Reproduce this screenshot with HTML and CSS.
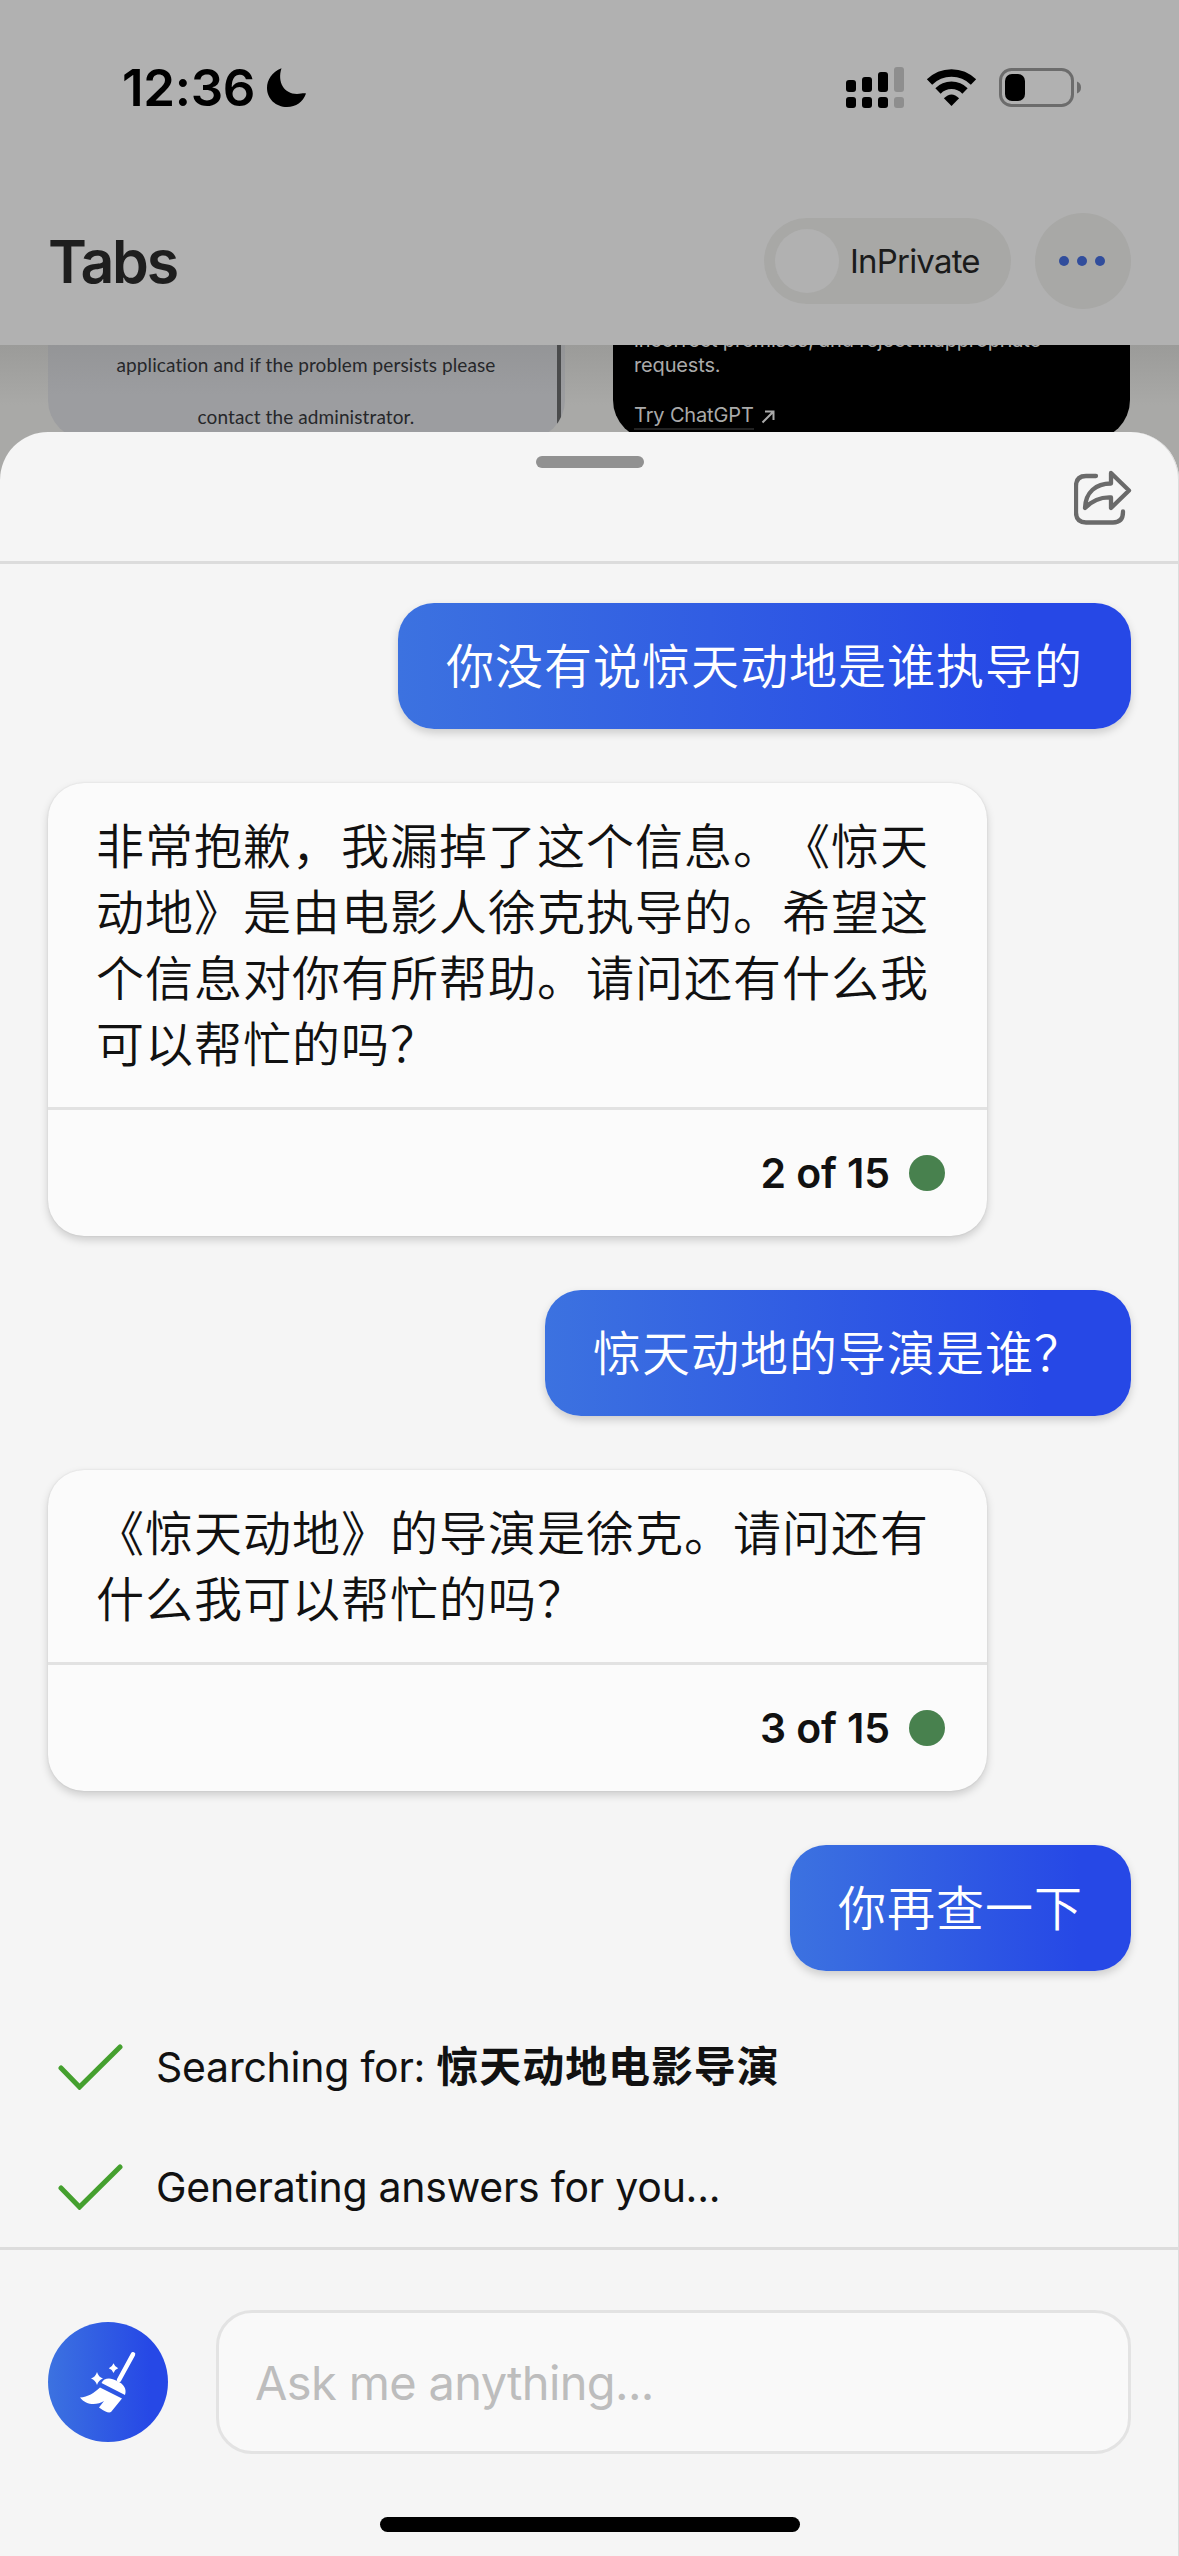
FILE: index.html
```html
<!DOCTYPE html>
<html lang="zh-CN">
<head>
    <meta charset="UTF-8">
    <meta name="viewport" content="width=device-width, initial-scale=1.0">
    <title>Chat</title>
    <link rel="stylesheet" href="styles.css">
</head>
<body>
    <header class="top">
        <div class="status-bar">
            <div class="clock">
                <span class="time">12:36</span>
                <svg class="moon" viewBox="266 68 41 41"><path d="M281.5 69.3C272 73 267 81 267 89C267 100 276 108 287 108C296 108 303 103 306 94.5C303 94 301 95 297 95C284 95 277 83 281.5 69.3Z"/></svg>
            </div>
            <svg class="status-icons" viewBox="846 66 236 43">
                <g>
                    <rect x="846" y="80" width="10" height="12" rx="3"/>
                    <rect x="862" y="77" width="10" height="15" rx="3"/>
                    <rect x="878" y="72" width="10" height="20" rx="3"/>
                    <rect x="846" y="97" width="10" height="11" rx="3"/>
                    <rect x="862" y="97" width="10" height="11" rx="3"/>
                    <rect x="878" y="97" width="10" height="11" rx="3"/>
                </g>
                <g fill="#8e8e8e">
                    <rect x="894" y="67" width="10" height="25" rx="3"/>
                    <rect x="894" y="97" width="10" height="11" rx="3"/>
                </g>
                <g fill="none" stroke="#000" stroke-width="7.5">
                    <path d="M929.5 82A31.2 31.2 0 0 1 973.5 82"/>
                    <path d="M938 91A19 19 0 0 1 965 91"/>
                </g>
                <path d="M943.9 98.3Q951.5 90.5 959.1 98.3L951.5 106Z"/>
                <rect x="1000.5" y="69.5" width="72" height="36" rx="11" fill="none" stroke="#6c6c6c" stroke-width="3"/>
                <rect x="1005" y="74" width="20" height="27" rx="7"/>
                <path d="M1077 81.5Q1081 83 1081 87.5T1077 93.500Z" fill="#6c6c6c"/>
            </svg>
        </div>
        <div class="tabs-bar">
            <h1>Tabs</h1>
            <div class="private-toggle">
                <span class="knob"></span>
                <span>InPrivate</span>
            </div>
            <div class="more"><i></i><i></i><i></i></div>
        </div>
    </header>

    <div class="tab-list">
        <div class="tab tab-error">
            <p>application and if the problem persists please</p>
            <p>contact the administrator.</p>
        </div>
        <div class="tab tab-chatgpt">
            <p>incorrect premises, and reject inappropriate<br>requests.</p>
            <div class="try">
                <span>Try ChatGPT</span>
                <svg viewBox="0 0 14 15"><path d="M1.500 13.500L12 3M4 2.500H12.500V11"/></svg>
            </div>
        </div>
    </div>

    <!-- 聊天面板 -->
    <main class="sheet">
        <div class="sheet-head">
            <div class="grabber"></div>
            <svg class="share" viewBox="34 20 58 56"><path d="M56 26H46Q36 26 36 36V62.500Q36 72.500 46 72.500H73Q83 72.500 83 62V61.500M71 23L89 40.500L71 58V47.500C61 47 52 51 45 58C45.500 42 56 33.500 71 33.500Z"/></svg>
        </div>
        <div class="chat">
            <div class="question">你没有说惊天动地是谁执导的</div>
            <div class="answer">
                <p>非常抱歉，我漏掉了这个信息。《惊天<br>动地》是由电影人徐克执导的。希望这<br>个信息对你有所帮助。请问还有什么我<br>可以帮忙的吗？</p>
                <div class="count">2 of 15<span class="dot"></span></div>
            </div>
            <div class="question">惊天动地的导演是谁？</div>
            <div class="answer">
                <p>《惊天动地》的导演是徐克。请问还有<br>什么我可以帮忙的吗？</p>
                <div class="count">3 of 15<span class="dot"></span></div>
            </div>
            <div class="question">你再查一下</div>
        </div>
        <div class="progress">
            <div class="step">
                <svg class="check" viewBox="58 45 65 46"><path d="M61 69L79.500 88L120 48"/></svg>
                <span class="searching">Searching for: <b>惊天动地电影导演</b></span>
            </div>
            <div class="step">
                <svg class="check" viewBox="58 45 65 46"><path d="M61 69L79.500 88L120 48"/></svg>
                <span>Generating answers for you...</span>
            </div>
        </div>
        <div class="composer">
            <div class="broom">
                <svg viewBox="8 12 120 120">
                    <path d="M93 44.300L79 70" stroke="#fff" stroke-width="4.500" stroke-linecap="round"/>
                    <path d="M61.500 73C64 67.500 71 67.500 77 71C84 74 87 79 85 85Z"/>
                    <path d="M60 77.500L82 88.500L71 102Q68 104 59 97.500L64 91C57 95.500 46 95.500 40 87.500C48 87 54 83 60 77.500Z"/>
                    <path d="M57 62Q58.500 67 63 68.500Q58.500 70 57 75Q55.500 70 51 68.500Q55.500 67 57 62ZM73.500 53.300Q74.700 57 78.200 58.200Q74.700 59.400 73.500 63Q72.300 59.400 68.800 58.200Q72.300 57 73.500 53.300Z"/>
                </svg>
            </div>
            <div class="input">Ask me anything...</div>
        </div>
        <div class="home-bar"></div>
    </main>
</body>
</html>
```

FILE: styles.css
```css
* {
    box-sizing: border-box;
}
body {
    margin: 0;
    width: 1179px;
    height: 2556px;
    overflow: hidden;
    background: #a9a9a7;
    font-family: Inter, "Noto Sans CJK SC", sans-serif;
    color: #111;
}
h1, p {
    margin: 0;
}
svg {
    display: block;
}

/* 顶部 */
.top {
    height: 345px;
    background: #b1b1b1;
}
.status-bar {
    display: flex;
    justify-content: space-between;
    height: 213px;
    padding: 66px 97px 0 122px;
}
.clock {
    display: flex;
    height: 43px;
    align-items: center;
}
.time {
    width: 144px;
    color: #000;
    font-size: 51px;
    font-weight: 600;
    letter-spacing: -0.3px;
}
.moon {
    width: 41px;
    height: 41px;
}
.status-icons {
    width: 236px;
    height: 43px;
}
.tabs-bar {
    display: flex;
    align-items: center;
    height: 96px;
    padding: 0 48px 0 48px;
}
.tabs-bar h1 {
    flex: 1;
    font-size: 59px;
    font-weight: 600;
    letter-spacing: -2.2px;
    color: #1e1e1e;
}
.private-toggle {
    display: flex;
    align-items: center;
    gap: 11px;
    width: 247px;
    height: 86px;
    padding-left: 11px;
    margin-right: 24px;
    border-radius: 43px;
    background: #a8a8a6;
    color: #1b1b1b;
    font-size: 33px;
    letter-spacing: -0.8px;
    white-space: nowrap;
}
.knob {
    width: 64px;
    height: 64px;
    border-radius: 50%;
    background: #b1b1b1;
}
.more {
    display: flex;
    justify-content: center;
    align-items: center;
    gap: 8px;
    width: 96px;
    height: 96px;
    padding-right: 2px;
    border-radius: 50%;
    background: #a8a8a6;
}
.more i {
    width: 10px;
    height: 10px;
    border-radius: 50%;
    background: #314d9c;
}

/* 标签页 */
.tab-list {
    display: flex;
    gap: 48px;
    height: 135px;
    padding: 0 48px;
    overflow: hidden;
    background: linear-gradient(#9b9b99, #a9a9a7 60px);
}
.tab {
    height: 95px;
    border-radius: 0 0 40px 40px;
    overflow: hidden;
}
.tab-error {
    width: 517px;
    padding-right: 1px;
    background: linear-gradient(90deg, transparent 509px, #4a4b4c 509px, #4a4b4c 513px, transparent 513px), linear-gradient(#949597, #9c9da0 50px);
    color: #26272a;
    font: 19px/52px Lato, sans-serif;
    letter-spacing: 0.1px;
    text-align: center;
}
.tab-error p:first-child {
    margin-top: -6px;
}
.tab-chatgpt {
    width: 517px;
    padding-left: 21px;
    background: #000;
    color: #aaa;
    font-size: 20px;
    line-height: 25px;
    letter-spacing: -0.15px;
}
.tab-chatgpt p {
    margin-top: -17px;
}
.try {
    display: flex;
    align-items: center;
    gap: 7px;
    margin-top: 25px;
}
.try span {
    border-bottom: 2px solid #222;
}
.try svg {
    width: 14px;
    height: 15px;
    fill: none;
    stroke: #aaa;
    stroke-width: 2;
}

/* 聊天面板 */
.sheet {
    position: relative;
    height: 2124px;
    margin-top: -48px;
    border-radius: 48px 48px 0 0;
    background: #f5f5f5;
    box-shadow: inset -1px 0 #dcdcdc;
}
.sheet-head {
    display: flex;
    justify-content: flex-end;
    height: 132px;
    padding: 24px 47px 0 0;
    border-bottom: 3px solid #dcdcdc;
}
.grabber {
    width: 108px;
    height: 12px;
    margin-right: 430px;
    border-radius: 6px;
    background: #919191;
}
.share {
    width: 58px;
    height: 56px;
    margin-top: 14px;
    fill: none;
    stroke: #6a6a6a;
    stroke-width: 4.3;
    stroke-linecap: round;
    stroke-linejoin: round;
}
.chat {
    display: flex;
    flex-direction: column;
    align-items: flex-start;
    gap: 54px;
    padding: 39px 48px 36px;
    font-size: 48px;
    letter-spacing: 1px;
    font-family: "Noto Sans CJK SC", sans-serif;
    font-weight: 350;
    text-spacing-trim: space-all;
}
.question {
    align-self: flex-end;
    height: 126px;
    padding: 0 48px;
    border-radius: 36px;
    background: linear-gradient(90deg, #3c72e0, #2648e6 85%);
    box-shadow: 0 4px 8px rgba(0, 0, 0, 0.17);
    color: #fff;
    line-height: 121px;
    white-space: nowrap;
}
.answer {
    width: 939px;
    border-radius: 36px;
    background: #fbfbfb;
    box-shadow: 0 4px 8px rgba(0, 0, 0, 0.17), 0 0 2px rgba(0, 0, 0, 0.1);
}
.answer p {
    padding: 27px 48px 33px;
    line-height: 66px;
    white-space: nowrap;
}
.count {
    display: flex;
    justify-content: flex-end;
    align-items: center;
    gap: 19px;
    height: 129px;
    padding-right: 42px;
    border-top: 3px solid #e2e2e2;
    font: 600 41px Inter, sans-serif;
    letter-spacing: -0.1px;
}
.dot {
    width: 36px;
    height: 36px;
    border-radius: 50%;
    background: #48814e;
}

/* 搜索进度 */
.progress {
    height: 240px;
    font-size: 41px;
    letter-spacing: -0.25px;
}
.step {
    display: flex;
    align-items: center;
    gap: 33px;
    height: 120px;
    padding-left: 58px;
    white-space: nowrap;
}
.searching {
    padding-bottom: 7px;
}
.step b {
    font-family: "Noto Sans CJK SC", sans-serif;
    font-size: 42px;
    letter-spacing: 0.9px;
}
.check {
    width: 65px;
    height: 46px;
    fill: none;
    stroke: #45a02f;
    stroke-width: 5;
    stroke-linecap: round;
}

/* 输入框 */
.composer {
    display: flex;
    align-items: center;
    gap: 48px;
    height: 267px;
    padding: 0 48px;
    border-top: 3px solid #dcdcdc;
}
.broom {
    width: 120px;
    height: 120px;
    border-radius: 50%;
    background: linear-gradient(90deg, #3c72e0, #2648e6 85%);
    fill: #fff;
}
.input {
    flex: 1;
    height: 144px;
    padding-left: 36px;
    border: 3px solid #e3e3e3;
    border-radius: 36px;
    background: #f9f9f9;
    color: #bdbdbd;
    font-size: 47px;
    line-height: 139px;
    letter-spacing: -0.65px;
}
.home-bar {
    width: 420px;
    height: 15px;
    margin: 3px auto 0;
    border-radius: 8px;
    background: #000;
}
```
